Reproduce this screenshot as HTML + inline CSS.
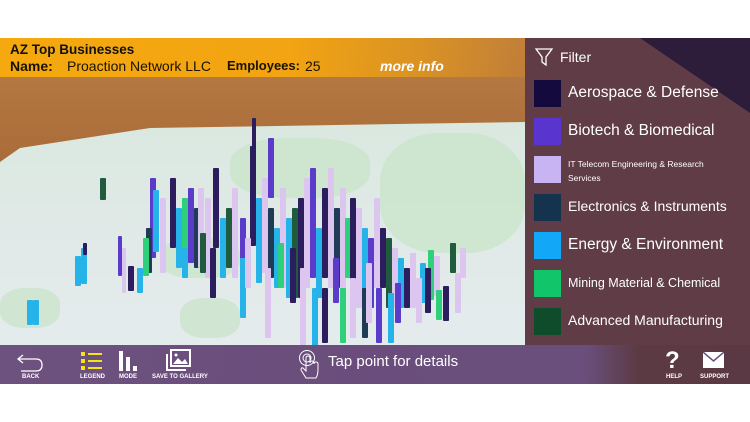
<!DOCTYPE html>
<html><head><meta charset="utf-8"><style>
*{margin:0;padding:0;box-sizing:border-box}
body{width:750px;height:422px;background:#fff;position:relative;overflow:hidden;font-family:"Liberation Sans",sans-serif}
#scene{position:absolute;left:0;top:38px;width:750px;height:346px;overflow:hidden;background:linear-gradient(180deg,#b87d45 0%,#a86a38 40%,#9c6033 100%)}
#map{position:absolute;left:0;top:0;width:525px;height:346px;background:linear-gradient(180deg,#d6e8da 0%,#dfe9e6 50%,#e6ecef 100%);clip-path:polygon(0 124px,20px 110px,150px 90px,525px 84px,525px 307px,0 307px)}
.g{position:absolute;background:#c8e4c8;border-radius:40%;opacity:.7}
.b{position:absolute;width:6px;border-radius:1px}
.k{background:#2b1d5e}.p{background:#5b3bc9}.l{background:#dcc6ef}.n{background:#1f3b55}.c{background:#26b3ea}.e{background:#2fd07c}.d{background:#1f5b3c}
#top{position:absolute;left:0;top:38px;width:525px;height:39px;background:linear-gradient(90deg,#f5a90e 0%,#f2a412 55%,rgba(224,150,30,.85) 80%,rgba(200,130,50,.6) 100%)}
#top .t{position:absolute;left:10px;top:4px;font-weight:bold;font-size:13.5px;color:#111}
#top .r{position:absolute;left:10px;top:20px;font-size:14px;color:#1a1200;white-space:nowrap}
#top .r span{position:absolute;top:0}
#panel{position:absolute;left:525px;top:38px;width:225px;height:307px;background:#5f3c46;overflow:hidden}
#panel .tri{position:absolute;right:0;top:0;width:0;height:0;border-top:75px solid #2d1d3b;border-left:110px solid transparent}
.it{position:absolute;left:9px;width:200px;height:28px}
.it .s{position:absolute;left:0;top:0;width:27px;height:27px}
.it .x{position:absolute;left:34px;top:4px;color:#fff;font-size:15.5px;white-space:nowrap}
#bot{position:absolute;left:0;top:345px;width:750px;height:39px;background:linear-gradient(90deg,#6d517e 0%,#6a4d7c 50%,#6a4f7c 78%,#5c3a44 85%,#5a3944 100%)}
.lb{position:absolute;color:#fff;font-size:6px;font-weight:bold;top:29px;text-align:center;white-space:nowrap}
</style></head><body>
<div id="scene">
<div id="map">
<div class="g" style="left:230px;top:100px;width:140px;height:60px"></div>
<div class="g" style="left:380px;top:95px;width:145px;height:120px"></div>
<div class="g" style="left:160px;top:200px;width:80px;height:40px"></div>
<div class="g" style="left:0;top:250px;width:60px;height:40px"></div>
<div class="g" style="left:180px;top:260px;width:60px;height:40px"></div>
</div>
<div class="b d" style="left:100px;top:140px;height:22px"></div>
<div class="b c" style="left:27px;top:262px;height:25px"></div>
<div class="b c" style="left:33px;top:262px;height:25px"></div>
<div class="b c" style="left:75px;top:218px;height:30px"></div>
<div class="b c" style="left:81px;top:210px;height:36px"></div>
<div class="b k" style="left:83px;top:205px;height:12px;width:4px"></div>
<div class="b p" style="left:118px;top:198px;height:40px;width:4px"></div>
<div class="b l" style="left:122px;top:210px;height:45px;width:4px"></div>
<div class="b k" style="left:128px;top:228px;height:25px"></div>
<div class="b c" style="left:137px;top:230px;height:25px"></div>
<div class="b p" style="left:150px;top:140px;height:80px"></div>
<div class="b c" style="left:153px;top:152px;height:62px"></div>
<div class="b n" style="left:146px;top:190px;height:45px"></div>
<div class="b e" style="left:143px;top:200px;height:38px"></div>
<div class="b l" style="left:160px;top:160px;height:75px"></div>
<div class="b k" style="left:170px;top:140px;height:70px"></div>
<div class="b c" style="left:176px;top:170px;height:60px"></div>
<div class="b e" style="left:182px;top:160px;height:60px"></div>
<div class="b p" style="left:188px;top:150px;height:75px"></div>
<div class="b n" style="left:194px;top:170px;height:60px"></div>
<div class="b l" style="left:198px;top:150px;height:80px"></div>
<div class="b k" style="left:213px;top:130px;height:80px"></div>
<div class="b l" style="left:205px;top:160px;height:80px"></div>
<div class="b c" style="left:220px;top:180px;height:60px"></div>
<div class="b d" style="left:226px;top:170px;height:60px"></div>
<div class="b l" style="left:232px;top:150px;height:90px"></div>
<div class="b p" style="left:240px;top:180px;height:55px"></div>
<div class="b k" style="left:250px;top:108px;height:100px"></div>
<div class="b c" style="left:256px;top:160px;height:85px"></div>
<div class="b l" style="left:262px;top:140px;height:95px"></div>
<div class="b n" style="left:268px;top:170px;height:70px"></div>
<div class="b c" style="left:274px;top:190px;height:60px"></div>
<div class="b k" style="left:252px;top:80px;height:40px;width:4px"></div>
<div class="b p" style="left:268px;top:100px;height:60px"></div>
<div class="b l" style="left:280px;top:150px;height:100px"></div>
<div class="b c" style="left:286px;top:180px;height:80px"></div>
<div class="b d" style="left:292px;top:170px;height:90px"></div>
<div class="b k" style="left:298px;top:160px;height:100px"></div>
<div class="b l" style="left:304px;top:140px;height:110px"></div>
<div class="b p" style="left:310px;top:130px;height:110px"></div>
<div class="b c" style="left:316px;top:190px;height:70px"></div>
<div class="b k" style="left:322px;top:150px;height:90px"></div>
<div class="b l" style="left:328px;top:130px;height:120px"></div>
<div class="b n" style="left:334px;top:170px;height:80px"></div>
<div class="b l" style="left:340px;top:150px;height:110px"></div>
<div class="b e" style="left:345px;top:180px;height:60px"></div>
<div class="b k" style="left:350px;top:160px;height:90px"></div>
<div class="b l" style="left:356px;top:170px;height:100px"></div>
<div class="b c" style="left:362px;top:190px;height:80px"></div>
<div class="b p" style="left:368px;top:200px;height:70px"></div>
<div class="b l" style="left:374px;top:160px;height:90px"></div>
<div class="b k" style="left:380px;top:190px;height:60px"></div>
<div class="b d" style="left:386px;top:200px;height:70px"></div>
<div class="b l" style="left:392px;top:210px;height:60px"></div>
<div class="b c" style="left:398px;top:220px;height:50px"></div>
<div class="b k" style="left:404px;top:230px;height:40px"></div>
<div class="b l" style="left:410px;top:215px;height:55px"></div>
<div class="b c" style="left:420px;top:225px;height:40px"></div>
<div class="b e" style="left:428px;top:212px;height:50px"></div>
<div class="b l" style="left:434px;top:218px;height:40px"></div>
<div class="b d" style="left:450px;top:205px;height:30px"></div>
<div class="b l" style="left:460px;top:210px;height:30px"></div>
<div class="b k" style="left:443px;top:248px;height:35px"></div>
<div class="b e" style="left:436px;top:252px;height:30px"></div>
<div class="b l" style="left:300px;top:230px;height:80px"></div>
<div class="b c" style="left:312px;top:250px;height:60px"></div>
<div class="b k" style="left:322px;top:250px;height:55px"></div>
<div class="b e" style="left:340px;top:250px;height:55px"></div>
<div class="b l" style="left:350px;top:240px;height:60px"></div>
<div class="b n" style="left:362px;top:250px;height:50px"></div>
<div class="b p" style="left:376px;top:250px;height:55px"></div>
<div class="b c" style="left:388px;top:255px;height:50px"></div>
<div class="b l" style="left:265px;top:230px;height:70px"></div>
<div class="b c" style="left:240px;top:220px;height:60px"></div>
<div class="b k" style="left:210px;top:210px;height:50px"></div>
<div class="b l" style="left:245px;top:200px;height:50px"></div>
<div class="b e" style="left:278px;top:205px;height:45px"></div>
<div class="b k" style="left:290px;top:210px;height:55px"></div>
<div class="b p" style="left:333px;top:220px;height:45px"></div>
<div class="b l" style="left:366px;top:225px;height:60px"></div>
<div class="b c" style="left:182px;top:210px;height:30px"></div>
<div class="b d" style="left:200px;top:195px;height:40px"></div>
<div class="b l" style="left:416px;top:240px;height:45px"></div>
<div class="b k" style="left:425px;top:230px;height:45px"></div>
<div class="b l" style="left:455px;top:235px;height:40px"></div>
<div class="b p" style="left:395px;top:245px;height:40px"></div>
</div>
<div id="top">
<div class="t">AZ Top Businesses</div>
<div class="r"><b>Name:</b><span style="left:57px">Proaction Network LLC</span><span style="left:217px;font-weight:bold;font-size:13px">Employees:</span><span style="left:295px">25</span><span style="left:370px;color:#fff;font-weight:bold;font-style:italic">more info</span></div>
</div>
<div id="panel"><div class="tri"></div>
<svg style="position:absolute;left:10px;top:10px" width="18" height="18" viewBox="0 0 18 18"><path d="M1 1H17L11 9V17L7 14V9Z" fill="none" stroke="#fff" stroke-width="1.3"/></svg>
<div style="position:absolute;left:35px;top:11px;color:#fff;font-size:14px">Filter</div>
<div class="it" style="top:42px"><div class="s" style="background:#150a3e"></div><div class="x">Aerospace &amp; Defense</div></div>
<div class="it" style="top:80px"><div class="s" style="background:#5a34cf"></div><div class="x">Biotech &amp; Biomedical</div></div>
<div class="it" style="top:118px"><div class="s" style="background:#c9b4f3"></div><div class="x" style="font-size:8.5px;top:1px;line-height:14px">IT Telecom Engineering &amp; Research<br>Services</div></div>
<div class="it" style="top:156px"><div class="s" style="background:#15324f"></div><div class="x" style="font-size:14px">Electronics &amp; Instruments</div></div>
<div class="it" style="top:194px"><div class="s" style="background:#13a8f7"></div><div class="x">Energy &amp; Environment</div></div>
<div class="it" style="top:232px"><div class="s" style="background:#11c56b"></div><div class="x" style="font-size:12.5px;top:6px">Mining Material &amp; Chemical</div></div>
<div class="it" style="top:270px"><div class="s" style="background:#0f4c2c"></div><div class="x" style="font-size:14px">Advanced Manufacturing</div></div>
</div>
<div id="bot">
<svg style="position:absolute;left:16px;top:8px" width="28" height="20" viewBox="0 0 28 20"><path d="M7 2L2 6L7 10M2 6H20Q26 6 26 12Q26 18 20 18H5" fill="none" stroke="#fff" stroke-width="1.3"/></svg>
<div class="lb" style="left:22px">BACK</div>
<svg style="position:absolute;left:81px;top:6px" width="22" height="20"><rect x="0" y="1" width="4" height="4" fill="#f5e31a"/><rect x="0" y="8" width="4" height="4" fill="#f5e31a"/><rect x="0" y="15" width="4" height="4" fill="#f5e31a"/><rect x="7" y="2" width="14" height="2" fill="#f5e31a"/><rect x="7" y="9" width="14" height="2" fill="#f5e31a"/><rect x="7" y="16" width="14" height="2" fill="#f5e31a"/></svg>
<div class="lb" style="left:80px">LEGEND</div>
<svg style="position:absolute;left:119px;top:6px" width="20" height="20"><rect x="0" y="0" width="4" height="20" fill="#fff"/><rect x="7" y="6" width="4" height="14" fill="#fff"/><rect x="14" y="15" width="4" height="5" fill="#fff"/></svg>
<div class="lb" style="left:119px">MODE</div>
<svg style="position:absolute;left:166px;top:4px" width="26" height="22"><rect x="5" y="1" width="19" height="16" fill="none" stroke="#fff" stroke-width="2"/><path d="M1 5V21H20" fill="none" stroke="#fff" stroke-width="2"/><path d="M7 15L12 9L16 13L19 10L22 15Z" fill="#fff"/><circle cx="10" cy="6" r="1.5" fill="#fff"/></svg>
<div class="lb" style="left:152px">SAVE TO GALLERY</div>
<svg style="position:absolute;left:298px;top:4px" width="22" height="32" viewBox="0 0 22 32"><circle cx="9" cy="9" r="7.5" fill="none" stroke="#fff" stroke-width="1"/><circle cx="9" cy="9" r="4" fill="none" stroke="#fff" stroke-width="1"/><path d="M8 9V22L5 19Q3 18 3 21L8 29H18Q20 26 20 20V15Q20 13 18 13Q16 13 16 15Q16 12 14 12Q12 12 12 14V9Q12 7 10 7Q8 7 8 9" fill="none" stroke="#fff" stroke-width="1"/></svg>
<div style="position:absolute;left:328px;top:8px;color:#fff;font-size:15px">Tap point for details</div>
<div style="position:absolute;left:665px;top:2px;color:#fff;font-size:24px;font-weight:bold">?</div>
<div class="lb" style="left:666px">HELP</div>
<svg style="position:absolute;left:703px;top:7px" width="21" height="16"><rect x="0" y="0" width="21" height="16" fill="#fff"/><path d="M0 0L10.5 9L21 0" fill="none" stroke="#6a4f7c" stroke-width="1.5"/></svg>
<div class="lb" style="left:700px">SUPPORT</div>
</div>
</body></html>
